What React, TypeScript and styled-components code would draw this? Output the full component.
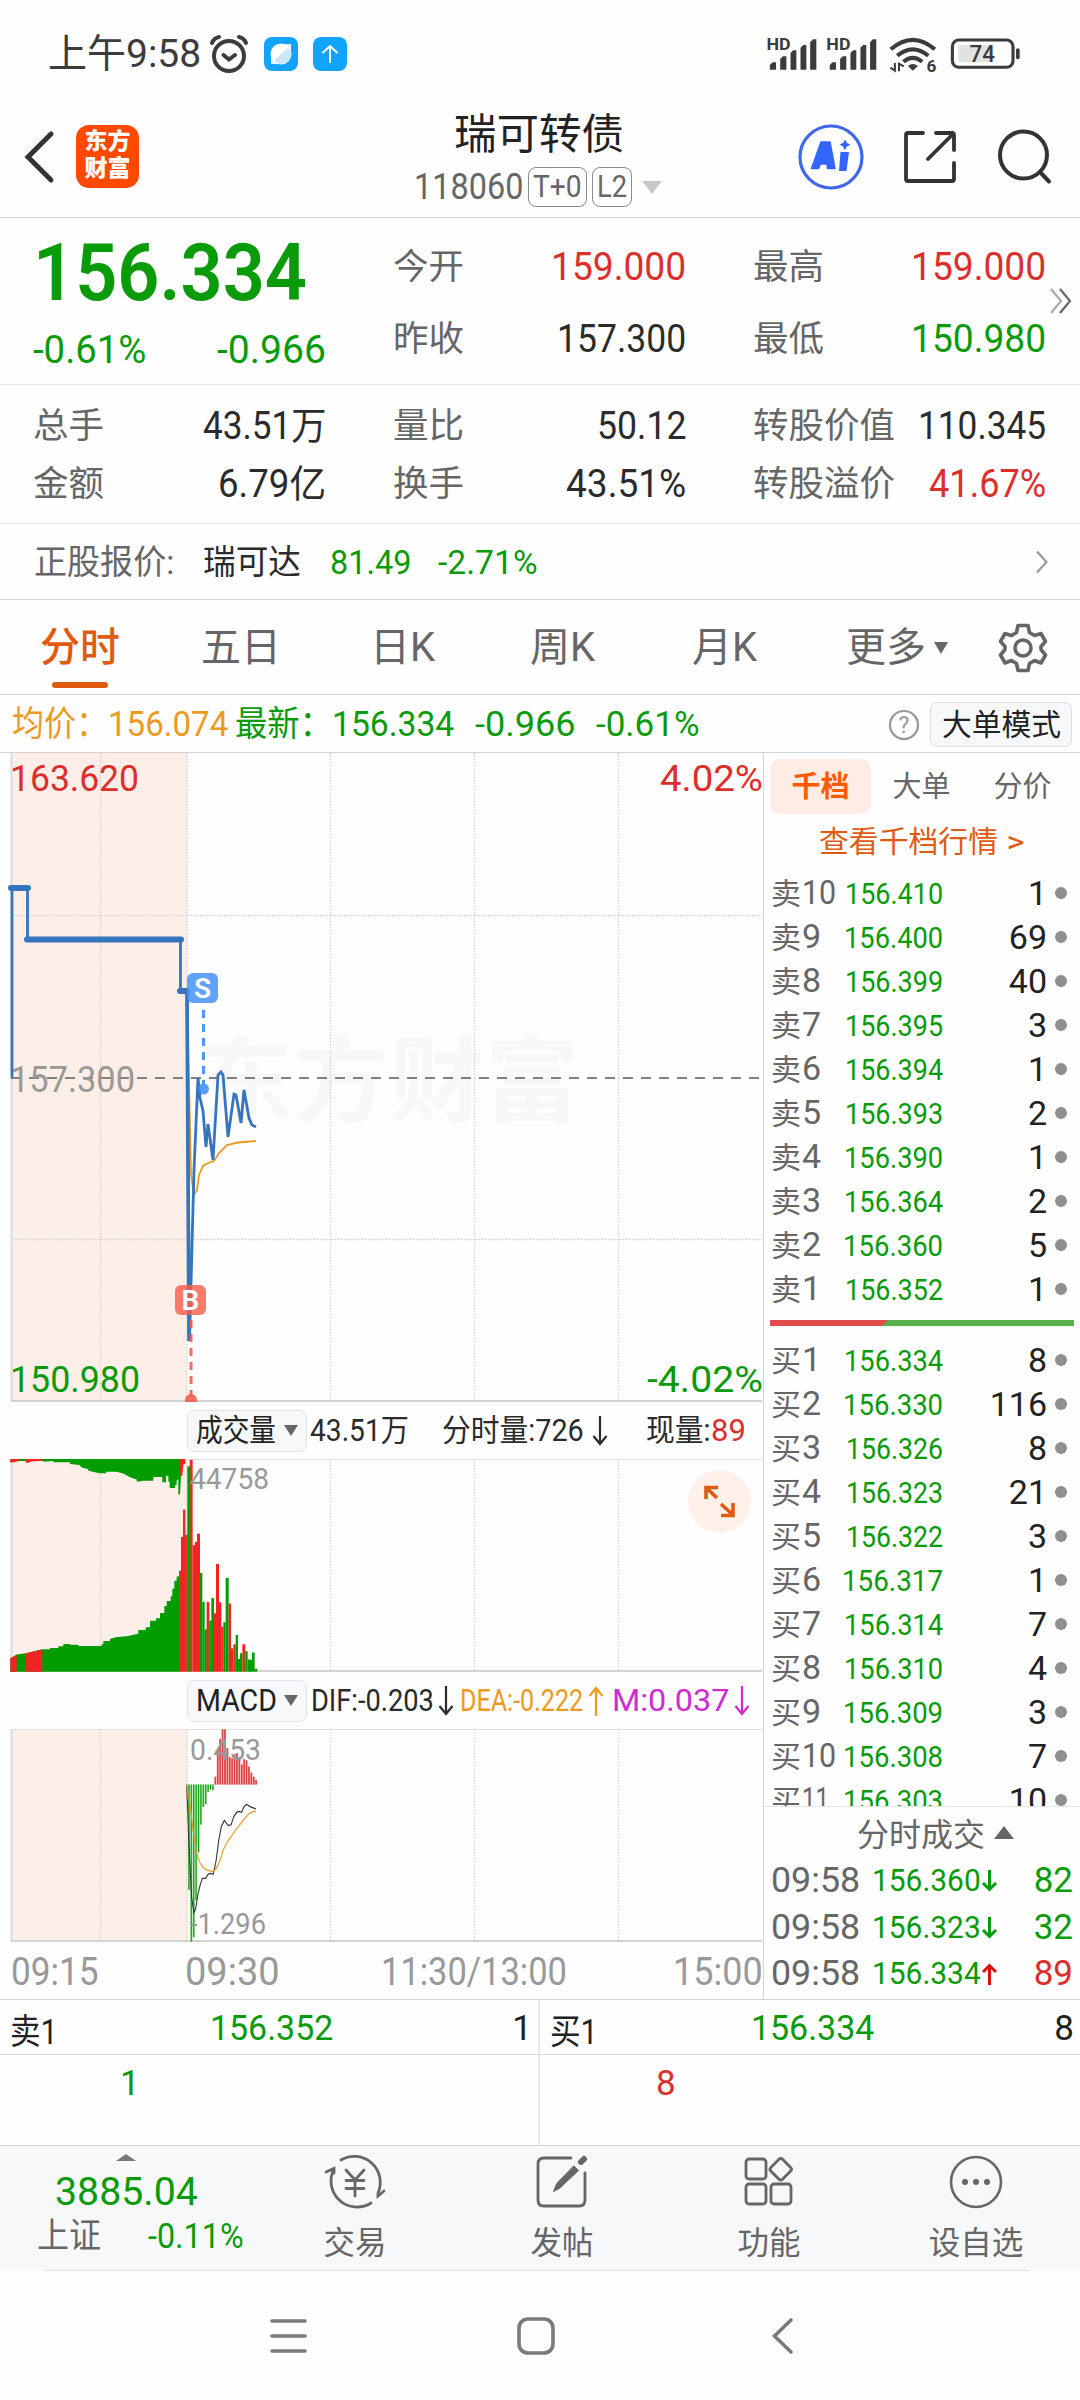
import React, { useLayoutEffect, useRef, useState } from "react";
import styled, { createGlobalStyle } from "styled-components";

const C = {
  green: "#0a9b0a",
  red: "#dc2f2c",
  orange: "#e05a10",
  amber: "#ec9a22",
  ink: "#2b2b2b",
  text: "#666666",
  muted: "#999999",
  line: "#d4d4d4",
  soft: "#e6e6e6",
  blush: "#fdeee8",
  blue: "#3575be",
};

const Global = createGlobalStyle`
  * { box-sizing: border-box; }
  html, body { margin: 0; padding: 0; background: #fefefe; }
  body { font-family: Roboto, "Noto Sans CJK SC", sans-serif; color: ${C.ink}; }
  svg { display: block; flex: none; }
`;

/* Text that is condensed or widened to an exact column width. */
const FitBox = styled.span<{ $w: number }>`
  display: inline-block;
  flex: none;
  width: ${(p) => p.$w}px;
  white-space: nowrap;
  text-align: left;
`;
const FitInner = styled.span`
  display: inline-block;
  transform-origin: left center;
  white-space: pre;
`;
function Fit({ w, children }: { w: number; children: React.ReactNode }) {
  const ref = useRef<HTMLSpanElement>(null);
  const [scale, setScale] = useState(1);
  useLayoutEffect(() => {
    if (ref.current) setScale(w / ref.current.offsetWidth);
  }, [w, children]);
  return (
    <FitBox $w={w}>
      <FitInner ref={ref} style={{ transform: `scaleX(${scale})` }}>
        {children}
      </FitInner>
    </FitBox>
  );
}

const Screen = styled.main`
  width: 1080px;
  height: 2400px;
  overflow: hidden;
  background: #fefefe;
  display: flex;
  flex-direction: column;
`;

/* ---------- status bar ---------- */
const StatusBar = styled.div`
  height: 108px;
  padding: 0 0 0 48px;
  display: flex;
  align-items: center;
  color: #3c3c3c;
  font-size: 39px;
  line-height: 50px;
`;
const StatusIcons = styled.div`
  display: flex;
  align-items: center;
  gap: 15px;
  margin-left: 8px;
`;
const StatusRight = styled.div`
  margin-left: auto;
  margin-right: 56px;
`;

function Signal({ x }: { x: number }) {
  return (
    <g transform={`translate(${x} 0)`} fill="#3c3c3c">
      <text x="-3" y="150" fontSize="47" fontWeight="700" textLength="70" lengthAdjust="spacingAndGlyphs">HD</text>
      <path d="M7 210v-14l8-8h10v22zM37 210v-32l8-8h10v40zM67 210v-50l8-8h9v58zM96 210v-66l8-8h9v74zM124 210v-82l8-9h10v91z" />
    </g>
  );
}

/* ---------- header ---------- */
const Header = styled.header`
  height: 110px;
  display: grid;
  grid-template-columns: 400px 276px 1fr;
  border-bottom: 1px solid ${C.line};
`;
const HeaderLeft = styled.div`
  display: flex;
  align-items: center;
  padding: 0 0 12px 23px;
  gap: 21px;
`;
const Logo = styled.div`
  width: 63px;
  height: 63px;
  border-radius: 13px;
  background: #ff4800;
  color: #fff;
  font-weight: 900;
  font-size: 23px;
  line-height: 27px;
  padding-top: 3px;
  text-align: center;
`;
const HeaderTitle = styled.div`
  display: flex;
  flex-direction: column;
  align-items: center;
  padding-top: 1px;
`;
const Title = styled.div`
  font-size: 42.5px;
  line-height: 52px;
  color: #222;
  margin-left: 2px;
`;
const SubTitle = styled.div`
  display: flex;
  align-items: center;
  gap: 5px;
  height: 40px;
  margin-top: 6px;
  margin-left: 0;
  font-size: 36px;
  line-height: 40px;
  color: ${C.text};
`;
const Tag = styled.span`
  height: 40px;
  line-height: 37px;
  font-size: 31px;
  border: 1.5px solid #8a8a8a;
  border-radius: 8px;
  padding: 0 4px;
`;
const HeaderRight = styled.div`
  display: flex;
  align-items: center;
  padding: 0 0 12px 121px;
`;

/* ---------- quotes ---------- */
const QuoteGrid = styled.section<{ $h: number; $pt: number }>`
  position: relative;
  height: ${(p) => p.$h}px;
  padding: ${(p) => p.$pt}px 34px 0 33px;
  display: grid;
  grid-template-columns: 293px 293px 293px;
  column-gap: 67px;
  align-items: start;
  border-bottom: 1px solid ${C.soft};
`;
const Price = styled.div`
  height: 84px;
  line-height: 85px;
  font-size: 80px;
  font-weight: 600;
  color: ${C.green};
`;
const Pair = styled.div<{ $h: number }>`
  height: ${(p) => p.$h}px;
  line-height: ${(p) => p.$h}px;
  display: flex;
  justify-content: space-between;
  font-size: 38px;
`;
const Label = styled.span`
  font-size: 35.5px;
  color: ${C.text};
  white-space: nowrap;
`;
const Val = styled.span<{ $c?: string }>`
  color: ${(p) => p.$c || C.ink};
`;
const MoreMark = styled.div`
  position: absolute;
  right: 8px;
  top: 70px;
`;
const Underlying = styled.section`
  height: 76px;
  padding: 1px 32px 0 34px;
  display: flex;
  align-items: center;
  font-size: 34px;
  line-height: 46px;
  border-bottom: 1px solid ${C.line};
`;
const Gap = styled.i<{ $w: number }>`
  flex: none;
  width: ${(p) => p.$w}px;
`;
const Push = styled.i`
  flex: 1;
`;

/* ---------- tabs ---------- */
const Tabs = styled.nav`
  height: 95px;
  display: flex;
  align-items: stretch;
  padding: 2px 0 0 40px;
  font-size: 40px;
  color: ${C.text};
  border-bottom: 1px solid ${C.line};
`;
const Tab = styled.div<{ $w: number; $on?: boolean }>`
  width: ${(p) => p.$w}px;
  color: ${(p) => (p.$on ? C.orange : "inherit")};
  line-height: 92px;
  display: flex;
  align-items: center;
  white-space: nowrap;
  flex: none;
`;
const ActiveLabel = styled.span`
  height: 92px;
  position: relative;
  font-weight: 500;
  &::after {
    content: "";
    position: absolute;
    left: 12px;
    width: 56px;
    bottom: 6px;
    height: 6px;
    border-radius: 3px;
    background: ${C.orange};
  }
`;

const InfoBar = styled.div`
  height: 58px;
  padding: 2px 8px 0 12px;
  display: flex;
  align-items: center;
  font-size: 35px;
  line-height: 55px;
  border-bottom: 1px solid ${C.line};
`;
const ModeButton = styled.button`
  width: 142px;
  height: 45px;
  margin: 0 0 0 10px;
  padding: 0;
  border: 1.5px solid #d9dce2;
  border-radius: 7px;
  background: #f7f8fa;
  color: #222;
  font: 30px/40px Roboto, "Noto Sans CJK SC", sans-serif;
`;

/* ---------- main body ---------- */
const Body = styled.section`
  height: 1247px;
  display: grid;
  grid-template-columns: 764px 316px;
  border-bottom: 1px solid ${C.line};
`;
const ChartColumn = styled.div`
  border-right: 1px solid ${C.line};
  overflow: hidden;
`;
const IndicatorBar = styled.div`
  height: 57px;
  padding-left: 187px;
  display: flex;
  align-items: center;
  font-size: 31px;
  line-height: 42px;
`;
const Picker = styled.button`
  width: 120px;
  height: 42px;
  flex: none;
  border: 1.5px solid #e3e5ea;
  border-radius: 7px;
  background: #f7f8fa;
  padding: 0 8px 0 8px;
  display: flex;
  align-items: center;
  justify-content: space-between;
  color: #222;
  font: 31px/38px Roboto, "Noto Sans CJK SC", sans-serif;
`;
const TimeAxis = styled.div`
  height: 57px;
  padding: 2px 0 0 11px;
  display: flex;
  align-items: center;
  font-size: 38px;
  color: ${C.muted};
`;

/* ---------- order book ---------- */
const Book = styled.aside`
  display: flex;
  flex-direction: column;
  min-width: 0;
`;
const BookTabs = styled.div`
  display: flex;
  padding: 6px 0 0 6px;
  font-size: 29px;
  line-height: 56px;
  color: ${C.text};
`;
const BookTab = styled.div<{ $on?: boolean }>`
  width: 101px;
  height: 55px;
  text-align: center;
  border-radius: 10px;
  ${(p) => p.$on && `background: #ffece4; color: #ff5a00; font-weight: 700;`}
`;
const DepthLink = styled.div`
  height: 56px;
  padding-left: 55px;
  line-height: 56px;
  font-size: 29.5px;
  color: ${C.orange};
`;
const Level = styled.div`
  height: 44px;
  flex: none;
  padding: 0 13px 0 7px;
  display: grid;
  grid-template-columns: 66px 106px 1fr 12px;
  align-items: center;
  line-height: 45px;
`;
const LevelName = styled.span`
  font-size: 30px;
  color: ${C.text};
  white-space: nowrap;
  b { font-weight: 400; font-size: 34px; margin-left: 1px; }
`;
const LevelPrice = styled.span`
  font-size: 30px;
  color: ${C.green};
  text-align: right;
`;
const LevelQty = styled.span`
  font-size: 34px;
  color: #222;
  text-align: right;
  padding-right: 8px;
`;
const Dot = styled.i`
  width: 12px;
  height: 12px;
  border-radius: 50%;
  background: #8e8e93;
`;
const RatioBar = styled.div`
  margin: 10px 6px 0;
  height: 6px;
  flex: none;
  background: linear-gradient(135deg, #e04b4b 0 83px, #58b14a 84px);
`;
const Bids = styled.div`
  margin-top: 11px;
  height: 470px;
  overflow: hidden;
  border-bottom: 1px solid ${C.soft};
`;
const TradeTitle = styled.div`
  height: 50px;
  display: flex;
  align-items: center;
  justify-content: center;
  gap: 9px;
  padding-left: 27px;
  font-size: 32px;
  color: ${C.text};
`;
const Trade = styled.div`
  height: 46.5px;
  padding: 2px 7px 0 7px;
  display: flex;
  align-items: center;
  font-size: 35px;
  line-height: 46px;
`;
const TradePrice = styled.span`
  font-size: 31px;
  color: ${C.green};
  margin-left: 12px;
`;

/* ---------- best bid / ask ---------- */
const BestGrid = styled.section`
  display: grid;
  grid-template-columns: 1fr 1fr;
  height: 146px;
  border-bottom: 1px solid ${C.line};
`;
const BestCell = styled.div`
  &:first-child { border-right: 2px solid ${C.soft}; }
`;
const BestRow = styled.div`
  height: 55px;
  padding: 3px 6px 0 10px;
  display: grid;
  grid-template-columns: 60px 1fr 60px;
  align-items: center;
  font-size: 35px;
  border-bottom: 1px solid #dcdcdc;
  color: #222;
  > :first-child { white-space: nowrap; }
  > :nth-child(2) { text-align: center; color: ${C.green}; }
  > :last-child { text-align: right; }
`;
const BestQueue = styled.div<{ $c: string; $x: number }>`
  padding-left: ${(p) => p.$x}px;
  font-size: 35px;
  line-height: 58px;
  color: ${(p) => p.$c};
`;

/* ---------- bottom bar ---------- */
const BottomBar = styled.footer`
  height: 124px;
  background: #f7f8fa;
  display: grid;
  grid-template-columns: 252px repeat(4, 207px);
  color: ${C.text};
`;
const IndexCell = styled.div`
  padding-top: 8px;
  display: flex;
  flex-direction: column;
  align-items: center;
`;
const IndexValue = styled.div`
  font-size: 39px;
  line-height: 44px;
  margin-top: 9px;
  color: ${C.green};
`;
const IndexRow = styled.div`
  display: flex;
  align-items: center;
  gap: 47px;
  margin-left: 29px;
  font-size: 35px;
  line-height: 46px;
`;
const Action = styled.div`
  display: flex;
  flex-direction: column;
  align-items: center;
  padding-top: 7px;
  margin-left: -1px;
  font-size: 31.5px;
  line-height: 46px;
  gap: 10px;
`;
const NavBar = styled.div`
  height: 130px;
  margin: 0 50px 0 44px;
  border-top: 1px solid #dedede;
  display: flex;
  align-items: center;
  padding-left: 224px;
`;

/* ---------- data ---------- */
const asks: [string, string, string, number][] = [
  ["10", "156.410", "1", 98], ["9", "156.400", "69", 99], ["8", "156.399", "40", 98],
  ["7", "156.395", "3", 98], ["6", "156.394", "1", 98], ["5", "156.393", "2", 98],
  ["4", "156.390", "1", 99], ["3", "156.364", "2", 99], ["2", "156.360", "5", 100], ["1", "156.352", "1", 98],
];
const bids: [string, string, string, number][] = [
  ["1", "156.334", "8", 99], ["2", "156.330", "116", 100], ["3", "156.326", "8", 97],
  ["4", "156.323", "21", 97], ["5", "156.322", "3", 97], ["6", "156.317", "1", 101],
  ["7", "156.314", "7", 99], ["8", "156.310", "4", 99], ["9", "156.309", "3", 100],
  ["10", "156.308", "7", 100], ["11", "156.303", "10", 100],
];
const R = "#f12424";
const G = "#009c00";
const volume: [number, number, number, string][] = [
  [537, 7, 468, R], [543, 7, 385, R], [549, 7, 318, R], [556, 7, 380, R], [562, 8, 212, G], [569, 9, 196, R],
  [578, 8, 405, R], [585, 7, 397, R], [591, 9, 377, R], [600, 7, 473, G], [607, 7, 544, G], [614, 6, 612, G],
  [620, 8, 544, R], [628, 7, 590, G], [634, 8, 535, G], [642, 7, 572, R], [648, 9, 451, R], [657, 7, 545, R],
  [664, 6, 605, R], [670, 7, 594, G], [677, 9, 485, G], [686, 7, 548, R], [693, 7, 658, R], [700, 7, 648, R],
  [707, 7, 625, G], [714, 6, 684, G], [720, 7, 670, G], [727, 9, 648, R], [736, 7, 665, G], [743, 7, 685, G],
  [750, 6, 686, G], [756, 8, 668, G], [764, 8, 708, G],
];
const macd: number[] = [
  1250, 1377, 1366, 1275, 1158, 1090, 1047, 1040, 1010, 1004, 1006, 973, 905, 880, 857, 857, 903, 925, 928, 918,
  915, 925, 943, 930, 933, 948, 963, 973, 981,
];

function ChartText(p: { x: number; y: number; w: number; c: string; size?: number; children: string }) {
  return (
    <text x={p.x} y={p.y} fill={p.c} fontSize={p.size || 37} textLength={p.w} lengthAdjust="spacingAndGlyphs">
      {p.children}
    </text>
  );
}

function Grid({ h, rows = [] }: { h: number; rows?: number[] }) {
  return (
    <g fill="none" stroke="#d2d2d2" strokeWidth="1.3">
      <rect x="11" y="0" width="176" height={h} fill={C.blush} stroke="none" />
      {[100.5, 187, 330.5, 474.5, 618.5].map((x) => (
        <path key={x} d={`M${x} 0V${h}`} strokeDasharray="1.5 1.5" />
      ))}
      {rows.map((y) => (
        <path key={y} d={`M11 ${y}H762`} strokeDasharray="1.5 1.5" />
      ))}
      <path d={`M11.5 0V${h}`} stroke="#dcdcdc" strokeWidth="2" />
      <path d={`M11 ${h - 1}H762`} strokeWidth="2" />
    </g>
  );
}

function PriceChart() {
  return (
    <svg width="762" height="649" viewBox="0 753 762 649">
      <text x="199" y="1115" fontSize="94" fontWeight="700" fill="#f7f7f7" textLength="380">东方财富</text>
      <g transform="translate(0 753)"><Grid h={649} rows={[162.5, 486.5]} /></g>
      <path d="M11 1078H762" stroke="#808080" strokeWidth="1.8" strokeDasharray="10 8" />
      <path d="M187 995L189 1080L191 1175L194 1195L197 1190L199 1175L203 1166L208 1163L214 1161L219 1153L227 1145L238 1142.5L256 1141" fill="none" stroke="#e99a22" strokeWidth="1.8" />
      <g fill="none" stroke={C.blue} strokeWidth="2.8">
        <path d="M12 1078V888M27.5 888V939M180.5 939V991" />
        <path d="M11 888H28M27 939.5H181M180 991H187" strokeWidth="6" strokeLinecap="round" />
        <path d="M187 991L189.5 1341L194 1170L198 1078L200 1098L203 1111L206 1147L208 1124L213 1160L218 1075L221 1072L223 1075L228 1137L234 1094L236 1095L241 1123L244 1090L249 1118L252 1125L256 1127" />
        <path d="M187 992L189 1341" strokeWidth="3.6" />
      </g>
      <path d="M203.5 1010V1085" stroke="#4d97f5" strokeWidth="3" strokeDasharray="8 6" />
      <circle cx="203.5" cy="1089" r="5.5" fill="#3b8cf5" opacity=".85" />
      <rect x="187" y="973" width="31" height="30" rx="6" fill="#4592fa" opacity=".85" />
      <text x="202.5" y="998" textAnchor="middle" fill="#fff" fontSize="28" fontWeight="600">S</text>
      <path d="M191 1320V1396" stroke="#f4553f" strokeWidth="3" strokeDasharray="8 6" opacity=".85" />
      <circle cx="191" cy="1400" r="6" fill="#f4553f" opacity=".85" />
      <rect x="175" y="1285" width="31" height="30" rx="6" fill="#fb5c4a" opacity=".8" />
      <text x="190.5" y="1310" textAnchor="middle" fill="#fff" fontSize="28" fontWeight="600">B</text>
      <ChartText x={10} y={791} w={129} c={C.red}>163.620</ChartText>
      <ChartText x={660} y={791} w={103} c={C.red}>4.02%</ChartText>
      <ChartText x={10} y={1092} w={125} c={C.muted}>157.300</ChartText>
      <ChartText x={10} y={1392} w={130} c={C.green}>150.980</ChartText>
      <ChartText x={647} y={1392} w={116} c={C.green}>-4.02%</ChartText>
    </svg>
  );
}

function VolumeChart() {
  return (
    <svg width="762" height="213" viewBox="0 0 762 213">
      <Grid h={213} />
      <path d="M11 .5H762" stroke="#dedede" />
      <g transform="scale(.33333 .40816) translate(0 -194)">
        <path fill={G} d="M31 715V682L50 673L78 670L127 660H150V657H175V653H190V647H210V649H235V652H305V648H310V640H330V635L350 630L380 628L415 622V613H437V606H450V590H468V584H480V571H493V554H500V542H512V530H517V512H523V492H530V482H537V715Z" />
        <path fill={R} d="M31 715V682L50 675V715ZM78 715V670L127 661V715Z" />
        <path fill={G} d="M31 194H543V236L540 281H535V245H530V258H525V265H509V250H505V235H498V251H487V238H460V247H427L420 249H410V244L390 239L372 230L350 225H318V229H298L265 223V219L245 215L238 209L210 206V202H160V199L130 201V198L62 199L31 202Z" />
        <path fill={R} d="M31 194H60V199H50L45 202H31ZM78 194H128V198L95 200L85 203H78ZM540 194H556V205L550 208L547 235H541Z" />
        {volume.map(([x, w, y, c]) => (
          <rect key={x} x={x} y={y} width={w} height={715 - y} fill={c} />
        ))}
        <path d="M539 468V715M557 380V715M571 212V715M599 473V715M627 590V715M619 612V715M734 665V715M705 650V715" stroke="#8a6416" strokeWidth="3" />
      </g>
      <ChartText x={190} y={30} w={79} c={C.muted} size={29.5}>44758</ChartText>
      <circle cx="719.5" cy="42.5" r="31.5" fill="#fff1ea" />
      <g fill="none" stroke="#e05a10" strokeWidth="3.6">
        <path d="M718 28.5H706V40M706 28.5L717 39M721 45L733 56M721 56.5H733V44" />
      </g>
    </svg>
  );
}

function MacdChart() {
  return (
    <svg width="762" height="213" viewBox="0 0 762 213">
      <Grid h={213} />
      <path d="M11 .5H762" stroke="#dedede" />
      <g transform="scale(.33333 .40816) translate(0 -856)">
        {macd.map((v, i) => {
          const x = 564 + i * 7.2;
          const up = v < 992;
          return (
            <g key={i}>
              <rect x={x} y={Math.min(v, 992)} width="6" height={Math.abs(v - 992)} fill={up ? "#f77" : "#8fdc8f"} />
              <rect x={x + 1} y={Math.min(v, 992)} width="3.4" height={Math.abs(v - 992)} fill={up ? "#cf4040" : "#18a018"} />
            </g>
          );
        })}
        <g fill="none" strokeWidth="3.2">
          <path stroke="#333" d="M560 992L568 1160L575 1270L582 1306L587 1296L594 1260L600 1240L607 1222L617 1222L624 1212L632 1210L640 1212L648 1180L656 1130L664 1095L673 1080L684 1092L693 1091L702 1070L710 1060L717 1058L725 1060L732 1046L740 1041L752 1047L768 1052" />
          <path stroke="#e99a22" d="M560 992L570 1040L580 1110L590 1160L600 1184L610 1196L622 1202L640 1206L650 1196L660 1178L670 1152L680 1135L695 1118L710 1100L722 1088L735 1074L748 1063L757 1059L768 1058" />
        </g>
      </g>
      <ChartText x={190} y={31} w={71} c={C.muted} size={29.5}>0.453</ChartText>
      <ChartText x={190} y={205} w={76} c={C.muted} size={29.5}>-1.296</ChartText>
    </svg>
  );
}

function Arrow({ up, c, bold }: { up?: boolean; c: string; bold?: boolean }) {
  return (
    <svg width={bold ? 17 : 16} height={bold ? 22 : 30} viewBox={bold ? "0 4 16 22" : "0 0 16 30"} fill="none" stroke={c} strokeWidth={bold ? 3 : 2.2}>
      {bold
        ? <path d={up ? "M8 26V6M1.5 13L8 6.5L14.5 13" : "M8 4V24M1.5 17L8 23.5L14.5 17"} />
        : <path d={up ? "M8 30V2M1.5 10L8 2L14.5 10" : "M8 0V28M1.5 20L8 28L14.5 20"} />}
    </svg>
  );
}

function Triangle({ w, h, c, up }: { w: number; h: number; c: string; up?: boolean }) {
  return (
    <svg width={w} height={h} viewBox="0 0 10 10" preserveAspectRatio="none">
      <path d={up ? "M0 10L5 0L10 10Z" : "M0 0H10L5 10Z"} fill={c} />
    </svg>
  );
}

function Levels({ side, rows }: { side: string; rows: [string, string, string, number][] }) {
  return (
    <>
      {rows.map(([n, price, qty, w]) => (
        <Level key={n}>
          <LevelName>
            {side}
            <b>{n.length > 1 ? <Fit w={n === "11" ? 27 : 34}>{n}</Fit> : n}</b>
          </LevelName>
          <LevelPrice><Fit w={w}>{price}</Fit></LevelPrice>
          <LevelQty>{qty}</LevelQty>
          <Dot />
        </Level>
      ))}
    </>
  );
}

export default function App() {
  return (
    <Screen>
      <Global />
      <StatusBar>
        <Fit w={153}>上午9:58</Fit>
        <StatusIcons>
          <svg width="40" height="40" viewBox="0 0 40 40" fill="none" stroke="#3c3c3c" strokeWidth="4" strokeLinecap="round">
            <circle cx="20" cy="22" r="15" />
            <path d="M3 9Q5 4 10 3M37 9Q35 4 30 3M14.5 21L20 25.5L26 21" />
          </svg>
          <svg width="34" height="34" viewBox="0 0 34 34">
            <rect width="34" height="34" rx="8" fill="#12a4fb" />
            <circle cx="17" cy="17" r="10.5" fill="#fff" />
            <path d="M7.500 26.500L27 7.500V16Q27 27 16 27Z" fill="#cbe7fd" />
            <path d="M7 27V20L14 27ZM27 7H20L27 14Z" fill="#fff" opacity=".8" />
          </svg>
          <svg width="34" height="34" viewBox="0 0 34 34">
            <rect width="34" height="34" rx="8" fill="#12a4fb" />
            <path d="M17 26V9M9.5 16L17 9L24.5 16" fill="none" stroke="#fff" strokeWidth="2" />
          </svg>
        </StatusIcons>
        <StatusRight>
          <svg width="260" height="40" viewBox="0 0 260 40">
            <g transform="scale(.3444 .3333) translate(-650 -103)">
              <Signal x={660} />
              <Signal x={834} />
              <g fill="none" stroke="#3c3c3c" strokeWidth="12">
                <path d="M1018 149Q1082 92 1146 149M1037 168Q1082 130 1127 168M1055 186Q1082 163 1109 186" />
              </g>
              <path d="M1068 199Q1082 187 1097 199L1082 213Z" fill="#3c3c3c" />
              <path d="M1030 190V213L1017 204M1042 215V192L1056 200" fill="none" stroke="#3c3c3c" strokeWidth="6" />
              <text x="1122" y="216" fontSize="50" fontWeight="700" fill="#3c3c3c">6</text>
              <rect x="1197" y="121" width="176" height="82" rx="19" fill="none" stroke="#3c3c3c" strokeWidth="9" />
              <rect x="1214" y="136" width="98" height="52" rx="8" fill="#e2e2e2" />
              <path d="M1387 151V173" stroke="#3c3c3c" strokeWidth="11" strokeLinecap="round" />
              <text x="1247" y="188" fontSize="72" fontWeight="500" fill="#3c3c3c" textLength="74" lengthAdjust="spacingAndGlyphs">74</text>
            </g>
          </svg>
        </StatusRight>
      </StatusBar>

      <Header>
        <HeaderLeft>
          <svg width="32" height="54" viewBox="0 0 32 54" fill="none" stroke="#333" strokeWidth="5" strokeLinecap="round" strokeLinejoin="miter">
            <path d="M28 4L5 27L28 50" />
          </svg>
          <Logo>东方<br />财富</Logo>
        </HeaderLeft>
        <HeaderTitle>
          <Title>瑞可转债</Title>
          <SubTitle>
            <Fit w={109}>118060</Fit>
            <Tag><Fit w={49}>T+0</Fit></Tag>
            <Tag><Fit w={30}>L2</Fit></Tag>
            <Gap $w={0} />
            <Triangle w={20} h={13} c="#c8c8c8" />
          </SubTitle>
        </HeaderTitle>
        <HeaderRight>
          <svg width="68" height="68" viewBox="0 0 68 68">
            <circle cx="34" cy="34" r="31" fill="none" stroke="#4168ea" strokeWidth="3.2" />
            <path fillRule="evenodd" fill="#3366ff" stroke="#3366ff" strokeWidth="1.5" strokeLinejoin="round" d="M24 19H33L38 45.5H30.5L30 41H23.5L21.5 45.5H14.500ZM27 34.500H29.500L29 29.500Z" />
            <path fill="#3366ff" d="M43.5 29H52L49.5 48H42ZM48 16.500L50 20L53.5 21.5L50 23.500L47.500 27L46 23.5L42.500 21.5L46 20Z" />
          </svg>
          <Gap $w={37} />
          <svg width="56" height="56" viewBox="0 0 56 56" fill="none" stroke="#333" strokeWidth="3.8" strokeLinecap="round">
            <path d="M21 4H6Q4 4 4 6V50Q4 52 6 52H50Q52 52 52 50V34M34 4H50Q52 4 52 6V21M51 5L26 30" />
          </svg>
          <Gap $w={37} />
          <svg width="58" height="58" viewBox="0 0 58 58" fill="none" stroke="#333" strokeWidth="4" strokeLinecap="round">
            <circle cx="28.5" cy="27" r="23.5" />
            <path d="M45 44L54 53.5" />
          </svg>
        </HeaderRight>
      </Header>

      <QuoteGrid $h={167} $pt={13}>
        <div>
          <Price><Fit w={274}>156.334</Fit></Price>
          <Pair $h={71}>
            <Val $c={C.green}><Fit w={113}>-0.61%</Fit></Val>
            <Val $c={C.green}><Fit w={109}>-0.966</Fit></Val>
          </Pair>
        </div>
        <div>
          <Pair $h={72}><Label>今开</Label><Val $c={C.red}><Fit w={135}>159.000</Fit></Val></Pair>
          <Pair $h={72}><Label>昨收</Label><Val><Fit w={129}>157.300</Fit></Val></Pair>
        </div>
        <div>
          <Pair $h={72}><Label>最高</Label><Val $c={C.red}><Fit w={135}>159.000</Fit></Val></Pair>
          <Pair $h={72}><Label>最低</Label><Val $c={C.green}><Fit w={135}>150.980</Fit></Val></Pair>
        </div>
        <MoreMark>
          <svg width="22" height="26" viewBox="0 0 22 26" fill="none" strokeWidth="2.2">
            <path d="M1 1L11 13L1 25" stroke="#aaa" />
            <path d="M10 1L20 13L10 25" stroke="#666" />
          </svg>
        </MoreMark>
      </QuoteGrid>

      <QuoteGrid $h={139} $pt={12}>
        <div>
          <Pair $h={58}><Label>总手</Label><Val><Fit w={123}>43.51万</Fit></Val></Pair>
          <Pair $h={58}><Label>金额</Label><Val><Fit w={108}>6.79亿</Fit></Val></Pair>
        </div>
        <div>
          <Pair $h={58}><Label>量比</Label><Val><Fit w={89}>50.12</Fit></Val></Pair>
          <Pair $h={58}><Label>换手</Label><Val><Fit w={120}>43.51%</Fit></Val></Pair>
        </div>
        <div>
          <Pair $h={58}><Label>转股价值</Label><Val><Fit w={128}>110.345</Fit></Val></Pair>
          <Pair $h={58}><Label>转股溢价</Label><Val $c={C.red}><Fit w={117}>41.67%</Fit></Val></Pair>
        </div>
      </QuoteGrid>

      <Underlying>
        <Val $c={C.text}><Fit w={140}>正股报价:</Fit></Val>
        <Gap $w={29} />
        <Val><Fit w={98}>瑞可达</Fit></Val>
        <Gap $w={29} />
        <Val $c={C.green}><Fit w={81}>81.49</Fit></Val>
        <Gap $w={27} />
        <Val $c={C.green}><Fit w={100}>-2.71%</Fit></Val>
        <Push />
        <svg width="12" height="24" viewBox="0 0 12 24" fill="none" stroke="#999" strokeWidth="2.2"><path d="M1 1.5L10.5 12L1 22.5" /></svg>
      </Underlying>

      <Tabs>
        <Tab $w={161} $on><ActiveLabel>分时</ActiveLabel></Tab>
        <Tab $w={169}>五日</Tab>
        <Tab $w={160}>日K</Tab>
        <Tab $w={162}>周K</Tab>
        <Tab $w={154}>月K</Tab>
        <Tab $w={150}>更多<Gap $w={8} /><Triangle w={14} h={12} c={C.text} /></Tab>
        <Tab $w={60}>
          <svg width="54" height="54" viewBox="0 0 54 54" fill="none" stroke={C.text} strokeWidth="3.6" strokeLinejoin="round">
            <circle cx="27" cy="27" r="8" />
            <path d="M22 4.500H32L33.500 11.500L38.500 14.500L45 12.500L49.500 20.500L45 25.500V28.500L49.500 34L45 42L38.500 39.500L33.500 42.500L32 49.500H22L20.500 42.500L15.500 39.500L9 42L4.500 34L9 28.500V25.500L4.500 20.500L9 12.500L15.500 14.500L20.500 11.500Z" />
          </svg>
        </Tab>
      </Tabs>

      <InfoBar>
        <Val $c={C.amber}><Fit w={96}>均价：</Fit><Fit w={120}>156.074</Fit></Val>
        <Gap $w={7} />
        <Val $c={C.green}>
          <Fit w={97}>最新：</Fit><Fit w={122}>156.334</Fit>
        </Val>
        <Gap $w={21} />
        <Val $c={C.green}><Fit w={101}>-0.966</Fit></Val>
        <Gap $w={20} />
        <Val $c={C.green}><Fit w={104}>-0.61%</Fit></Val>
        <Push />
        <svg width="32" height="32" viewBox="0 0 32 32">
          <circle cx="16" cy="16" r="14" fill="none" stroke="#999" strokeWidth="2.2" />
          <text x="16" y="24" textAnchor="middle" fontSize="23" fill="#999">?</text>
        </svg>
        <ModeButton><Fit w={119}>大单模式</Fit></ModeButton>
      </InfoBar>

      <Body>
        <ChartColumn>
          <PriceChart />
          <IndicatorBar>
            <Picker><Fit w={80}>成交量</Fit><Triangle w={14} h={11} c={C.text} /></Picker>
            <Gap $w={3} />
            <Fit w={99}>43.51万</Fit>
            <Gap $w={33} />
            <Fit w={142}>分时量:726</Fit>
            <Gap $w={8} />
            <Arrow c={C.ink} />
            <Gap $w={38} />
            <Fit w={65}>现量:</Fit>
            <Val $c={C.red}><Fit w={35}>89</Fit></Val>
          </IndicatorBar>
          <VolumeChart />
          <IndicatorBar>
            <Picker><Fit w={81}>MACD</Fit><Triangle w={14} h={11} c={C.text} /></Picker>
            <Gap $w={4} />
            <Fit w={123}>DIF:-0.203</Fit>
            <Gap $w={4} />
            <Arrow c={C.ink} />
            <Gap $w={6} />
            <Val $c={C.amber}><Fit w={123}>DEA:-0.222</Fit></Val>
            <Gap $w={5} />
            <Arrow c={C.amber} up />
            <Gap $w={8} />
            <Val $c="#cf2bd4"><Fit w={117}>M:0.037</Fit></Val>
            <Gap $w={5} />
            <Arrow c="#cf2bd4" />
          </IndicatorBar>
          <MacdChart />
          <TimeAxis>
            <Fit w={88}>09:15</Fit>
            <Gap $w={86} />
            <Fit w={95}>09:30</Fit>
            <Gap $w={101} />
            <Fit w={186}>11:30/13:00</Fit>
            <Gap $w={106} />
            <Fit w={90}>15:00</Fit>
          </TimeAxis>
        </ChartColumn>

        <Book>
          <BookTabs>
            <BookTab $on>千档</BookTab>
            <BookTab>大单</BookTab>
            <BookTab>分价</BookTab>
          </BookTabs>
          <DepthLink><Fit w={179}>查看千档行情</Fit><Gap $w={11} /><Fit w={27}>{" >"}</Fit></DepthLink>
          <Levels side="卖" rows={asks} />
          <RatioBar />
          <Bids><Levels side="买" rows={bids} /></Bids>
          <TradeTitle>分时成交<Triangle w={20} h={13} c={C.text} up /></TradeTitle>
          <Trade>
            <Val $c={C.text}><Fit w={89}>09:58</Fit></Val>
            <TradePrice><Fit w={109}>156.360</Fit></TradePrice>
            <Arrow c={C.green} bold />
            <Push /><Val $c={C.green}>82</Val>
          </Trade>
          <Trade>
            <Val $c={C.text}><Fit w={89}>09:58</Fit></Val>
            <TradePrice><Fit w={109}>156.323</Fit></TradePrice>
            <Arrow c={C.green} bold />
            <Push /><Val $c={C.green}>32</Val>
          </Trade>
          <Trade>
            <Val $c={C.text}><Fit w={89}>09:58</Fit></Val>
            <TradePrice><Fit w={109}>156.334</Fit></TradePrice>
            <Arrow c="#dc1010" bold up />
            <Push /><Val $c={C.red}>89</Val>
          </Trade>
        </Book>
      </Body>

      <BestGrid>
        <BestCell>
          <BestRow><Fit w={48}>卖1</Fit><span><Fit w={123}>156.352</Fit></span><span>1</span></BestRow>
          <BestQueue $c={C.green} $x={120}>1</BestQueue>
        </BestCell>
        <BestCell>
          <BestRow><Fit w={48}>买1</Fit><span><Fit w={123}>156.334</Fit></span><span>8</span></BestRow>
          <BestQueue $c={C.red} $x={116}>8</BestQueue>
        </BestCell>
      </BestGrid>

      <BottomBar>
        <IndexCell>
          <Triangle w={20} h={7} c="#75787d" up />
          <IndexValue><Fit w={143}>3885.04</Fit></IndexValue>
          <IndexRow><Fit w={64}>上证</Fit><Val $c={C.green}><Fit w={96}>-0.11%</Fit></Val></IndexRow>
        </IndexCell>
        <Action>
          <svg width="62" height="58" viewBox="0 0 62 58" fill="none" stroke={C.text} strokeWidth="2.8" strokeLinecap="round">
            <path d="M17 7A26 26 0 0 1 54 40M54 40V43L60 38M47 50A26 26 0 0 1 10 16M2 19L10 15.500V20M22 17L31 27L40 17M31 27V43M22 27.500H40M22 35.500H40" />
          </svg>
          交易
        </Action>
        <Action>
          <svg width="54" height="58" viewBox="0 0 54 58" fill="none" stroke={C.text} strokeWidth="2.8" strokeLinecap="round">
            <path d="M36 5H9Q3 5 3 11V47Q3 53 9 53H44Q50 53 50 47V20" />
            <path d="M46 9L49 6" strokeWidth="6" />
            <path d="M39 13L43.5 17.5L25 35L18.5 38.5L21.5 31Z" fill={C.text} strokeWidth="1" />
          </svg>
          发帖
        </Action>
        <Action>
          <svg width="52" height="58" viewBox="0 0 52 58" fill="none" stroke={C.text} strokeWidth="2.8">
            <rect x="3" y="6" width="20" height="20" rx="3" />
            <rect x="3" y="31" width="20" height="20" rx="3" />
            <rect x="28" y="31" width="20" height="20" rx="3" />
            <rect x="29.500" y="8" width="16.500" height="16.500" rx="2.500" transform="rotate(45 37.750 16.250)" />
          </svg>
          功能
        </Action>
        <Action>
          <svg width="58" height="58" viewBox="0 0 58 58" fill={C.text}>
            <circle cx="29" cy="29" r="25" fill="none" stroke={C.text} strokeWidth="2.6" />
            <circle cx="18" cy="29" r="3" /><circle cx="29" cy="29" r="3" /><circle cx="40" cy="29" r="3" />
          </svg>
          设自选
        </Action>
      </BottomBar>

      <NavBar>
        <svg width="40" height="40" viewBox="0 0 40 40" stroke="#7a7a7a" strokeWidth="3.6" strokeLinecap="round">
          <path d="M4 5H37M4 20H37M4 35H37" />
        </svg>
        <Gap $w={208} />
        <svg width="40" height="40" viewBox="0 0 40 40" fill="none" stroke="#7a7a7a" strokeWidth="3.6">
          <rect x="3" y="3" width="34" height="34" rx="9" />
        </svg>
        <Gap $w={214} />
        <svg width="24" height="40" viewBox="0 0 24 40" fill="none" stroke="#7a7a7a" strokeWidth="3.6" strokeLinecap="round">
          <path d="M21 4L4.5 20L21 36" />
        </svg>
      </NavBar>
    </Screen>
  );
}
